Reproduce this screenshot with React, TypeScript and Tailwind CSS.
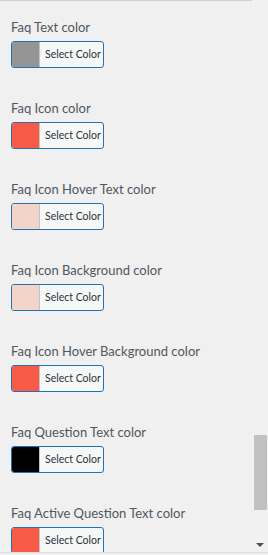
import React from "react";

const items: { label: string; color: string }[] = [
  { label: "Faq Text color", color: "#959595" },
  { label: "Faq Icon color", color: "#f75a47" },
  { label: "Faq Icon Hover Text color", color: "#f2d4c9" },
  { label: "Faq Icon Background color", color: "#f2d4c9" },
  { label: "Faq Icon Hover Background color", color: "#f75a47" },
  { label: "Faq Question Text color", color: "#000000" },
  { label: "Faq Active Question Text color", color: "#f75a47" },
];

export default function App() {
  return (
    <div className="w-[268px] h-[555px] bg-[#f0f0f0] overflow-hidden flex flex-col" style={{ fontFamily: 'Lato, "Noto Sans", sans-serif' }}>
      <div className="flex flex-1 min-h-0">
        <div className="flex-1 min-w-0 overflow-hidden">
          <div className="h-px w-full bg-[#d2d2d2]" />
          <div className="pl-[11px] pt-[17px] flex flex-col gap-[31px]">
            {items.map((it) => (
              <div key={it.label} className="flex flex-col">
                <div className="text-[13px] leading-[19px] text-[#50575e] whitespace-nowrap">{it.label}</div>
                <div className="mt-[4px] flex w-[93px] h-[27px] border border-[#2271b1] rounded-[3px] overflow-hidden bg-[#f6f7f7]">
                  <span className="w-[27px] h-full shrink-0" style={{ backgroundColor: it.color }} />
                  <span className="flex-1 border-l border-[#c3c4c7] flex items-center pl-[5px] text-[10.5px] leading-none text-[#2c3338] whitespace-nowrap">
                    Select Color
                  </span>
                </div>
              </div>
            ))}
          </div>
        </div>
        <div className="w-[16px] bg-[#f1f1f1] flex flex-col items-center">
          <div className="mt-[435px] w-[13px] h-[75px] bg-[#c1c1c1] ml-[1px]" />
          <div className="mt-auto mb-[5px] w-0 h-0 border-l-[4px] border-r-[4px] border-t-[4px] border-l-transparent border-r-transparent border-t-[#505050]" />
        </div>
      </div>
      <div className="h-[3px] border-t border-[#dcdcdc] bg-[#f0f0f0]" />
    </div>
  );
}
